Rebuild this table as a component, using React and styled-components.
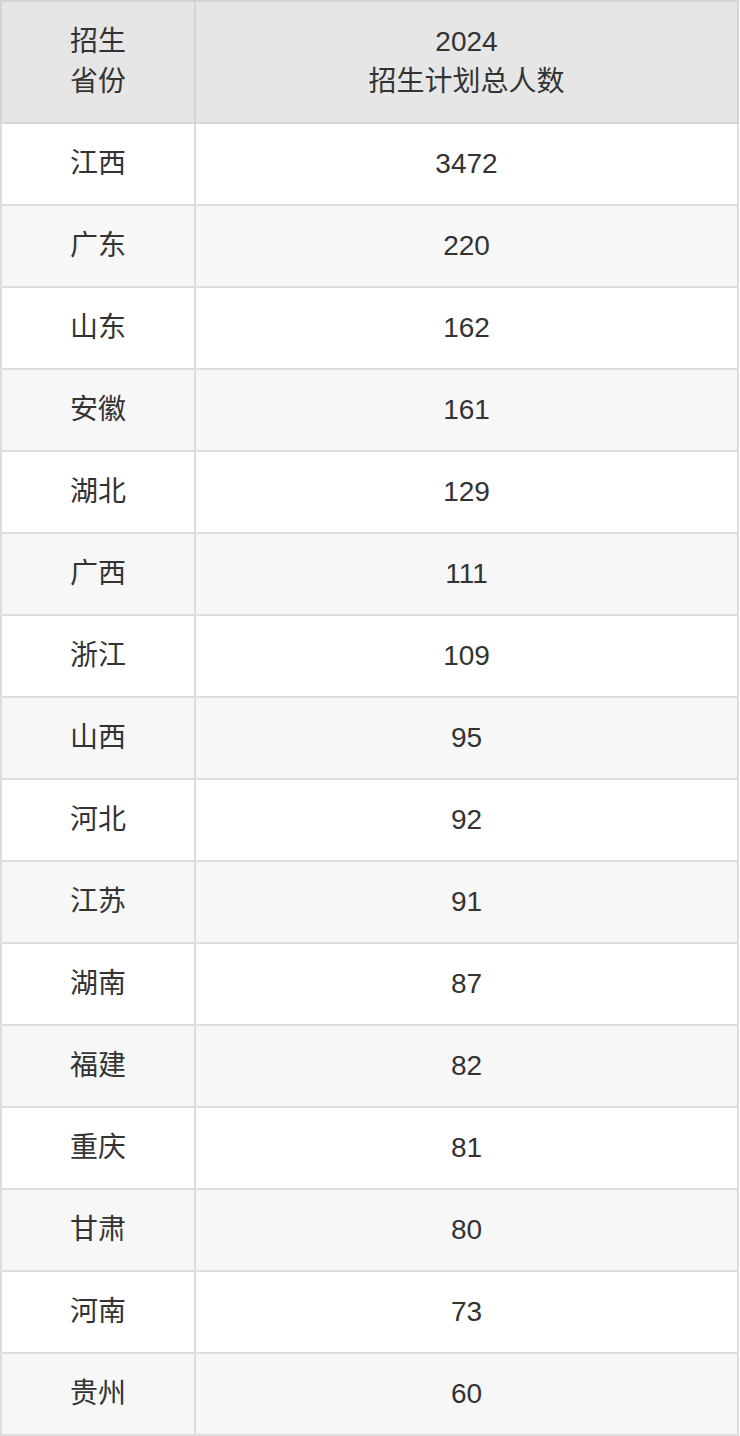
import React from "react";
import styled, { createGlobalStyle } from "styled-components";

const Global = createGlobalStyle`
  html, body { margin: 0; padding: 0; background: #fff; }
  body { font-family: "Liberation Sans", "Noto Sans CJK SC", sans-serif; }
`;

const Table = styled.table`
  width: 739px;
  border-collapse: collapse;
  table-layout: fixed;
  font-family: "Liberation Sans", "Noto Sans CJK SC", sans-serif;
  font-size: 28px;
  line-height: 40px;
  color: #333;
`;

const Th = styled.th`
  background: #e6e6e6;
  border: 2px solid #d4d4d4;
  padding: 20px 8px;
  font-weight: normal;
  text-align: center;
  vertical-align: middle;
`;

const Td = styled.td`
  border: 2px solid #dddddd;
  padding: 20px 8px;
  text-align: center;
  vertical-align: middle;
`;

const Row = styled.tr`
  background: ${(p) => (p.$alt ? "#f7f7f7" : "#ffffff")};
`;

const data = [
  ["江西", 3472],
  ["广东", 220],
  ["山东", 162],
  ["安徽", 161],
  ["湖北", 129],
  ["广西", 111],
  ["浙江", 109],
  ["山西", 95],
  ["河北", 92],
  ["江苏", 91],
  ["湖南", 87],
  ["福建", 82],
  ["重庆", 81],
  ["甘肃", 80],
  ["河南", 73],
  ["贵州", 60],
];

export default function App() {
  return (
    <>
      <Global />
      <Table>
        <colgroup>
          <col style={{ width: "194px" }} />
          <col />
        </colgroup>
        <thead>
          <tr>
            <Th>
              招生
              <br />
              省份
            </Th>
            <Th>
              2024
              <br />
              招生计划总人数
            </Th>
          </tr>
        </thead>
        <tbody>
          {data.map(([p, n], i) => (
            <Row key={p} $alt={i % 2 === 1}>
              <Td>{p}</Td>
              <Td>{n}</Td>
            </Row>
          ))}
        </tbody>
      </Table>
    </>
  );
}
